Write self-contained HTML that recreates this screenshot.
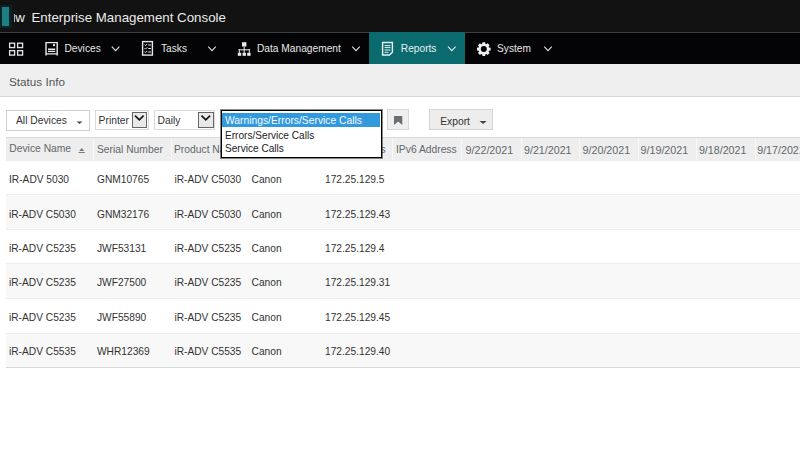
<!DOCTYPE html>
<html><head><meta charset="utf-8">
<style>
html,body{margin:0;padding:0;}
body{width:800px;height:451px;overflow:hidden;position:relative;background:#fff;font-family:"Liberation Sans",sans-serif;}
.a{position:absolute;}
.t{position:absolute;white-space:nowrap;line-height:0;}
.nav{font-size:10.2px;color:#e6e6e6;}
.tb{font-size:10.3px;color:#333;}
.th{font-size:10.3px;color:#62676c;}
.td{font-size:10.2px;color:#333;}
.chev{position:absolute;}
</style></head><body>
<!-- title bar -->
<div class="a" style="left:0;top:0;width:800px;height:32px;background:#121212;"></div>
<div class="a" style="left:0;top:32px;width:800px;height:1px;background:#394043;"></div>
<div class="a" style="left:0;top:5px;width:12px;height:23px;background:#0b2226;"></div>
<div class="a" style="left:2px;top:7px;width:7px;height:19px;background:#1d7f80;"></div>
<div class="a" style="left:13.8px;top:14.4px;width:1.3px;height:7.4px;background:#b8b8b8;"></div>
<div class="t" style="left:15.2px;top:17.6px;font-size:13.3px;color:#ececec;">w</div>
<div class="t" style="left:31.5px;top:17.6px;font-size:13.3px;color:#ececec;">Enterprise Management Console</div>

<!-- nav bar -->
<div class="a" style="left:0;top:33px;width:800px;height:31px;background:#040406;"></div>
<div class="a" style="left:369px;top:32px;width:96px;height:32px;background:#0b6a6e;"></div>

<!-- grid icon -->
<svg class="a" style="left:0;top:33px" width="40" height="31" viewBox="0 33 40 31">
 <g fill="none" stroke="#e8e8e8" stroke-width="1.3">
  <rect x="9.6" y="43.2" width="5" height="4.4"/>
  <rect x="17.6" y="43.2" width="5" height="4.4"/>
  <rect x="9.6" y="50.7" width="5" height="4.4"/>
  <rect x="17.6" y="50.7" width="5" height="4.4"/>
 </g>
</svg>
<!-- devices icon -->
<svg class="a" style="left:40px;top:33px" width="22" height="31" viewBox="40 33 22 31">
 <g fill="none" stroke="#e8e8e8" stroke-width="1.4">
  <path d="M46,55.4 V42.6 H57.2 V55.4 M46,53.9 H57.2"/>
  <path d="M48,49.2 H55.2 M48,51.4 H55.2"/>
 </g>
 <rect x="53" y="44.1" width="2" height="2" fill="#e8e8e8"/>
</svg>
<div class="t nav" style="left:64.5px;top:48.6px;">Devices</div>
<svg class="a" style="left:100px;top:33px" width="30" height="31" viewBox="100 33 30 31"><path d="M111.8,46.6 L115.6,50.6 L119.4,46.6" fill="none" stroke="#e0e0e0" stroke-width="1.1"/></svg>

<!-- tasks icon -->
<svg class="a" style="left:135px;top:33px" width="25" height="31" viewBox="135 33 25 31">
 <rect x="142.6" y="41.6" width="9.8" height="13.5" fill="none" stroke="#e8e8e8" stroke-width="1.4"/>
 <g fill="none" stroke="#e8e8e8" stroke-width="1">
  <path d="M144.5,44.6 l1,1 l1.8,-1.8 M144.5,48.1 l1,1 l1.8,-1.8 M144.5,51.6 l1,1 l1.8,-1.8"/>
  <path d="M148.2,45 H151 M148.2,48.5 H151 M148.2,52 H151" stroke-width="1.2"/>
 </g>
</svg>
<div class="t nav" style="left:161px;top:48.6px;">Tasks</div>
<svg class="a" style="left:200px;top:33px" width="30" height="31" viewBox="200 33 30 31"><path d="M208.2,46.6 L212,50.6 L215.8,46.6" fill="none" stroke="#e0e0e0" stroke-width="1.1"/></svg>

<!-- data mgmt icon -->
<svg class="a" style="left:232px;top:33px" width="24" height="31" viewBox="232 33 24 31">
 <g fill="#eaeaea">
  <rect x="242" y="42.2" width="4.4" height="4.3"/>
  <rect x="243.7" y="46.5" width="1" height="3.5"/>
  <rect x="238.5" y="49.3" width="11.6" height="1"/>
  <rect x="238.8" y="49.3" width="1" height="4"/>
  <rect x="243.7" y="49.3" width="1" height="4"/>
  <rect x="248.8" y="49.3" width="1" height="4"/>
  <rect x="237.8" y="52.8" width="3.4" height="3"/>
  <rect x="242.5" y="52.8" width="3.4" height="3"/>
  <rect x="247.2" y="52.8" width="3.4" height="3"/>
 </g>
</svg>
<div class="t nav" style="left:257px;top:48.6px;">Data Management</div>
<svg class="a" style="left:345px;top:33px" width="20" height="31" viewBox="345 33 20 31"><path d="M352.2,46.6 L356,50.6 L359.8,46.6" fill="none" stroke="#e0e0e0" stroke-width="1.1"/></svg>

<!-- reports icon -->
<svg class="a" style="left:375px;top:33px" width="25" height="31" viewBox="375 33 25 31">
 <path d="M382.6,42.5 H392.4 V52.3 L389.4,55 H382.6 Z" fill="none" stroke="#e6f4f4" stroke-width="1.4"/>
 <g stroke="#e6f4f4" stroke-width="1">
  <path d="M384.6,45.6 H390.4 M384.6,47.6 H390.4 M384.6,50 H390.4 M384.6,52.3 H388.4"/>
 </g>
</svg>
<div class="t nav" style="left:400.8px;top:48.6px;color:#e4f0f0;">Reports</div>
<svg class="a" style="left:440px;top:33px" width="20" height="31" viewBox="440 33 20 31"><path d="M448,46.6 L451.8,50.6 L455.6,46.6" fill="none" stroke="#e0f0f0" stroke-width="1.1"/></svg>

<!-- gear -->
<svg class="a" style="left:470px;top:33px" width="27" height="31" viewBox="470 33 27 31">
 <g transform="translate(483.8,49.1)" fill="#f0f0f0">
  <path d="M-1.67,-5.14 L-1.34,-6.87 L1.34,-6.87 L1.67,-5.14 L2.45,-4.81 L3.91,-5.80 L5.80,-3.91 L4.81,-2.45 L5.14,-1.67 L6.87,-1.34 L6.87,1.34 L5.14,1.67 L4.81,2.45 L5.80,3.91 L3.91,5.80 L2.45,4.81 L1.67,5.14 L1.34,6.87 L-1.34,6.87 L-1.67,5.14 L-2.45,4.81 L-3.91,5.80 L-5.80,3.91 L-4.81,2.45 L-5.14,1.67 L-6.87,1.34 L-6.87,-1.34 L-5.14,-1.67 L-4.81,-2.45 L-5.80,-3.91 L-3.91,-5.80 L-2.45,-4.81 Z"/>
 </g>
 <circle cx="483.8" cy="49.1" r="3.0" fill="#040406"/>
</svg>
<div class="t nav" style="left:497px;top:48.6px;">System</div>
<svg class="a" style="left:540px;top:33px" width="20" height="31" viewBox="540 33 20 31"><path d="M544.2,46.6 L548,50.6 L551.8,46.6" fill="none" stroke="#e0e0e0" stroke-width="1.1"/></svg>

<!-- status info bar -->
<div class="a" style="left:0;top:64px;width:800px;height:32px;background:#efefef;border-bottom:1px solid #d6d6d6;"></div>
<div class="t" style="left:9px;top:82px;font-size:11.7px;color:#555;">Status Info</div>

<!-- toolbar -->
<div class="a" style="left:6px;top:109.5px;width:82px;height:19px;border:1px solid #d0d0d0;background:#fff;"></div>
<div class="t tb" style="left:16px;top:120.8px;">All Devices</div>
<svg class="a" style="left:70px;top:115px" width="18" height="12" viewBox="70 115 18 12"><path d="M76.5,121.5 H82.5 L79.5,124 Z" fill="#444"/></svg>

<div class="a" style="left:95.3px;top:109.5px;width:51.5px;height:18.5px;border:1px solid #dadada;background:#fff;"></div>
<div class="t tb" style="left:98.6px;top:120.5px;">Printer</div>
<div class="a" style="left:131.5px;top:111.5px;width:13.6px;height:14.4px;border:1px solid #666;background:#e9e9e9;"></div>
<svg class="a" style="left:130px;top:110px" width="20" height="20" viewBox="130 110 20 20"><path d="M135,115.6 L139.3,119.9 L143.6,115.6" fill="none" stroke="#111" stroke-width="1.6"/></svg>

<div class="a" style="left:153.5px;top:109.5px;width:59.5px;height:18.5px;border:1px solid #dadada;background:#fff;"></div>
<div class="t tb" style="left:157.6px;top:120.5px;">Daily</div>
<div class="a" style="left:198px;top:111.5px;width:13.6px;height:14.4px;border:1px solid #666;background:#e9e9e9;"></div>
<svg class="a" style="left:196px;top:110px" width="20" height="20" viewBox="196 110 20 20"><path d="M201.5,115.6 L205.8,119.9 L210.1,115.6" fill="none" stroke="#111" stroke-width="1.6"/></svg>

<div class="a" style="left:387px;top:109.3px;width:19.5px;height:18.3px;border:1px solid #d6d6d6;background:#efefef;"></div>
<svg class="a" style="left:390px;top:112px" width="16" height="16" viewBox="390 112 16 16"><path d="M394,115.9 H402.3 V124.9 L398.15,121.6 L394,124.9 Z" fill="#6a6f74"/></svg>

<div class="a" style="left:429.2px;top:109.3px;width:62px;height:18.4px;border:1px solid #d4d4d4;background:#ededed;"></div>
<div class="t tb" style="left:440.2px;top:121.5px;">Export</div>
<svg class="a" style="left:476px;top:118px" width="14" height="8" viewBox="476 118 14 8"><path d="M479.5,121 H486.7 L483.1,124 Z" fill="#444"/></svg>

<!-- table header -->
<div class="a" style="left:6px;top:136.7px;width:794px;height:24px;background:#eeeeee;border-top:1px solid #dadada;box-sizing:border-box;"></div>
<div class="a" style="left:92.5px;top:138px;width:1px;height:22px;background:#f8f8f8;"></div>
<div class="a" style="left:170.5px;top:138px;width:1px;height:22px;background:#f8f8f8;"></div>
<div class="a" style="left:248px;top:138px;width:1px;height:22px;background:#f8f8f8;"></div>
<div class="a" style="left:321.5px;top:138px;width:1px;height:22px;background:#f8f8f8;"></div>
<div class="a" style="left:391.5px;top:138px;width:1px;height:22px;background:#f8f8f8;"></div>
<div class="a" style="left:461px;top:138px;width:1px;height:22px;background:#f8f8f8;"></div>
<div class="a" style="left:520.6px;top:138px;width:1px;height:22px;background:#f8f8f8;"></div>
<div class="a" style="left:579px;top:138px;width:1px;height:22px;background:#f8f8f8;"></div>
<div class="a" style="left:638px;top:138px;width:1px;height:22px;background:#f8f8f8;"></div>
<div class="a" style="left:696px;top:138px;width:1px;height:22px;background:#f8f8f8;"></div>
<div class="a" style="left:754.6px;top:138px;width:1px;height:22px;background:#f8f8f8;"></div>

<div class="t th" style="left:9.3px;top:149.1px;">Device Name</div>
<svg class="a" style="left:76px;top:145px" width="12" height="10" viewBox="76 145 12 10"><path d="M81.7,148 L84.2,151 H79.2 Z M78.6,152 H84.8 V152.9 H78.6 Z" fill="#7a7a7a"/></svg>
<div class="t th" style="left:97px;top:150.1px;">Serial Number</div>
<div class="t th" style="left:174px;top:150.1px;">Product Name</div>
<div class="t th" style="left:251.6px;top:150.1px;">Vendor</div>
<div class="t th" style="left:325px;top:150.1px;">IPv4 Address</div>
<div class="t th" style="left:396px;top:150.1px;">IPv6 Address</div>
<div class="t th" style="left:465.6px;top:149.9px;font-size:10.7px;">9/22/2021</div>
<div class="t th" style="left:524px;top:149.9px;font-size:10.7px;">9/21/2021</div>
<div class="t th" style="left:582.6px;top:149.9px;font-size:10.7px;">9/20/2021</div>
<div class="t th" style="left:640.6px;top:149.9px;font-size:10.7px;">9/19/2021</div>
<div class="t th" style="left:698.9px;top:149.9px;font-size:10.7px;">9/18/2021</div>
<div class="t th" style="left:757.2px;top:149.9px;font-size:10.7px;">9/17/2021</div>

<!-- rows -->
<div class="a" style="left:6px;top:160.70px;width:794px;height:34.58px;background:#fff;border-bottom:1px solid #eeeeee;box-sizing:border-box;"></div>
<div class="a" style="left:6px;top:195.28px;width:794px;height:34.58px;background:#f8f8f8;border-bottom:1px solid #eeeeee;box-sizing:border-box;"></div>
<div class="a" style="left:6px;top:229.86px;width:794px;height:34.58px;background:#fff;border-bottom:1px solid #eeeeee;box-sizing:border-box;"></div>
<div class="a" style="left:6px;top:264.44px;width:794px;height:34.58px;background:#f8f8f8;border-bottom:1px solid #eeeeee;box-sizing:border-box;"></div>
<div class="a" style="left:6px;top:299.02px;width:794px;height:34.58px;background:#fff;border-bottom:1px solid #eeeeee;box-sizing:border-box;"></div>
<div class="a" style="left:6px;top:333.60px;width:794px;height:34.58px;background:#f8f8f8;border-bottom:1px solid #d6d6d6;box-sizing:border-box;"></div>

<div class="t td" style="left:9px;top:180.2px;">IR-ADV 5030</div>
<div class="t td" style="left:97px;top:180.2px;">GNM10765</div>
<div class="t td" style="left:174.4px;top:180.2px;">iR-ADV C5030</div>
<div class="t td" style="left:251.6px;top:180.2px;">Canon</div>
<div class="t td" style="left:325px;top:180.2px;">172.25.129.5</div>

<div class="t td" style="left:9px;top:214.8px;">iR-ADV C5030</div>
<div class="t td" style="left:97px;top:214.8px;">GNM32176</div>
<div class="t td" style="left:174.4px;top:214.8px;">iR-ADV C5030</div>
<div class="t td" style="left:251.6px;top:214.8px;">Canon</div>
<div class="t td" style="left:325px;top:214.8px;">172.25.129.43</div>

<div class="t td" style="left:9px;top:249.3px;">iR-ADV C5235</div>
<div class="t td" style="left:97px;top:249.3px;">JWF53131</div>
<div class="t td" style="left:174.4px;top:249.3px;">iR-ADV C5235</div>
<div class="t td" style="left:251.6px;top:249.3px;">Canon</div>
<div class="t td" style="left:325px;top:249.3px;">172.25.129.4</div>

<div class="t td" style="left:9px;top:283.0px;">iR-ADV C5235</div>
<div class="t td" style="left:97px;top:283.0px;">JWF27500</div>
<div class="t td" style="left:174.4px;top:283.0px;">iR-ADV C5235</div>
<div class="t td" style="left:251.6px;top:283.0px;">Canon</div>
<div class="t td" style="left:325px;top:283.0px;">172.25.129.31</div>

<div class="t td" style="left:9px;top:317.8px;">iR-ADV C5235</div>
<div class="t td" style="left:97px;top:317.8px;">JWF55890</div>
<div class="t td" style="left:174.4px;top:317.8px;">iR-ADV C5235</div>
<div class="t td" style="left:251.6px;top:317.8px;">Canon</div>
<div class="t td" style="left:325px;top:317.8px;">172.25.129.45</div>

<div class="t td" style="left:9px;top:351.8px;">iR-ADV C5535</div>
<div class="t td" style="left:97px;top:351.8px;">WHR12369</div>
<div class="t td" style="left:174.4px;top:351.8px;">iR-ADV C5535</div>
<div class="t td" style="left:251.6px;top:351.8px;">Canon</div>
<div class="t td" style="left:325px;top:351.8px;">172.25.129.40</div>

<!-- dropdown list (on top) -->
<div class="a" style="left:221px;top:110px;width:159px;height:46px;border:1px solid #000;box-shadow:0 0 0 1px rgba(0,0,0,0.45);background:#fff;"></div>
<div class="a" style="left:222px;top:112.5px;width:158px;height:14px;background:#3399dd;"></div>
<div class="t" style="left:225px;top:120.9px;font-size:10.3px;color:#f2faff;">Warnings/Errors/Service Calls</div>
<div class="t" style="left:225px;top:136.4px;font-size:10.1px;color:#222;">Errors/Service Calls</div>
<div class="t" style="left:225px;top:149px;font-size:10.1px;color:#222;">Service Calls</div>
</body></html>
